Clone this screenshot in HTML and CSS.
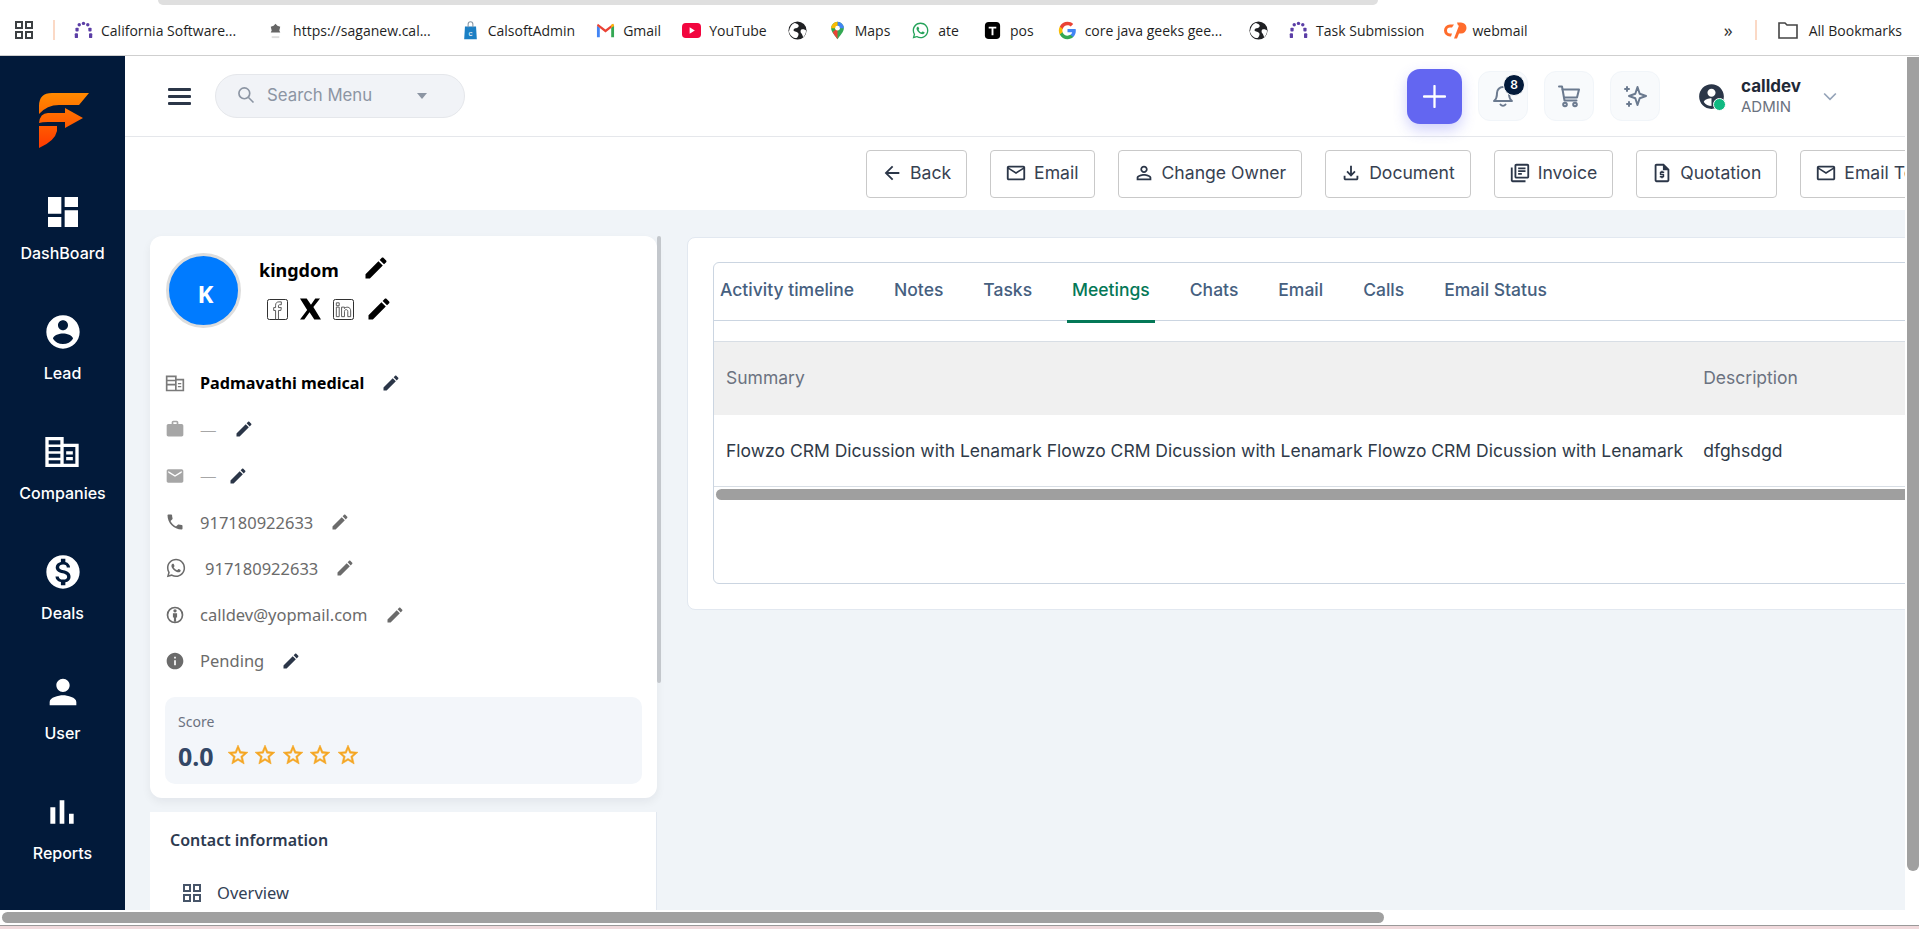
FILE: index.html
```html
<!DOCTYPE html>
<html lang="en">
<head>
    <meta charset="UTF-8">
    <title>Flowzo CRM - Lead</title>
    <link rel="stylesheet" href="styles.css">
</head>
<body>
    <svg class="sprite" xmlns="http://www.w3.org/2000/svg">
        <symbol id="i-edit" viewBox="0 0 24 24"><path d="M3 17.25V21h3.75L17.81 9.94l-3.75-3.75L3 17.25zM20.71 7.04c.39-.39.39-1.02 0-1.41l-2.34-2.34c-.39-.39-1.02-.39-1.41 0l-1.83 1.83 3.75 3.75 1.83-1.83z"/></symbol>
        <symbol id="i-star" viewBox="0 0 24 24"><path d="M22 9.24l-7.19-.62L12 2 9.19 8.63 2 9.24l5.46 4.73L5.82 21 12 17.27 18.18 21l-1.63-7.03L22 9.24zM12 15.4l-3.76 2.27 1-4.28-3.32-2.88 4.38-.38L12 6.1l1.71 4.04 4.38.38-3.32 2.88 1 4.28L12 15.4z"/></symbol>
        <symbol id="i-mail" viewBox="0 0 24 24"><path d="M20 4H4c-1.1 0-1.99.9-1.99 2L2 18c0 1.1.9 2 2 2h16c1.1 0 2-.9 2-2V6c0-1.1-.9-2-2-2zm0 14H4V8l8 5 8-5v10zm-8-7L4 6h16l-8 5z"/></symbol>
        <symbol id="i-arc" viewBox="0 0 20 20"><g fill="#5b3ea6"><circle cx="10" cy="2.5" r="1.8"/><circle cx="5.5" cy="4" r="1.8"/><circle cx="14.5" cy="4" r="1.8"/><rect x="1.5" y="7" width="3.4" height="4" rx="1"/><rect x="15.1" y="7" width="3.4" height="4" rx="1"/><rect x="0.8" y="13" width="3.4" height="5" rx="1"/><rect x="15.8" y="13" width="3.4" height="5" rx="1"/></g></symbol>
        <symbol id="i-globe" viewBox="0 0 20 20"><circle cx="10" cy="10" r="9.5" fill="#202124"/><path d="M7 2c3 1 5 2 4 4S7 7 6 9s2 2 4 3 1 4-1 6c-4 0-7-3-8-7 1-5 3-8 6-9zM14 9c2-1 4 0 5 1 0 3-1 5-3 7-1-2-1-3-2-4s-1-3 0-4z" fill="#fff"/></symbol>
    </svg>

    <div class="tabstrip-edge"></div>

    <!-- browser bookmarks bar -->
    <div class="bookmarks">
        <svg class="bm-apps" viewBox="0 0 18 18"><g fill="none" stroke="#3c4043" stroke-width="2"><rect x="1" y="1" width="6" height="6"/><rect x="11" y="1" width="6" height="6"/><rect x="1" y="11" width="6" height="6"/><rect x="11" y="11" width="6" height="6"/></g></svg>
        <span class="bm-sep"></span>
        <a class="bm bm-wide"><svg class="bm-ico"><use href="#i-arc"/></svg>California Software...</a>
        <a class="bm bm-wide"><svg class="bm-ico" viewBox="0 0 20 20"><path d="M10 3l2 2 3 1-1 4 1 2H5l1-2-1-4 3-1z" fill="#666"/><path d="M6 17h8" stroke="#ddd" stroke-width="2"/></svg>https://saganew.cal...</a>
        <a class="bm"><svg class="bm-ico" viewBox="0 0 20 24"><path d="M3 7h14l1 16H2z" fill="#1b7fc4"/><path d="M7 8V4a3 3 0 0 1 6 0v4" fill="none" stroke="#8a9aa8" stroke-width="1.4"/><text x="10" y="19" font-size="10" font-family="Liberation Sans" fill="#fff" text-anchor="middle">c</text></svg>CalsoftAdmin</a>
        <a class="bm"><svg class="bm-ico" viewBox="0 0 20 16"><path d="M1 15V3l3 2v10z" fill="#4285f4"/><path d="M19 15V3l-3 2v10z" fill="#34a853"/><path d="M1 3l9 7 9-7-1-2-8 6-8-6z" fill="#ea4335"/><path d="M16 5l3-2-1-2-2 1z" fill="#fbbc04"/></svg>Gmail</a>
        <a class="bm"><svg class="bm-ico" viewBox="0 0 20 20"><rect y="2" width="20" height="16" rx="4" fill="#f2063f"/><path d="M8 6.5l5.5 3.5L8 13.5z" fill="#fff"/></svg>YouTube</a>
        <a class="bm"><svg class="bm-ico"><use href="#i-globe"/></svg></a>
        <a class="bm"><svg class="bm-ico" viewBox="0 0 20 24"><path d="M10 1a8 8 0 0 1 8 8c0 5-5 9-8 14-3-5-8-9-8-14a8 8 0 0 1 8-8z" fill="#34a853"/><path d="M10 1a8 8 0 0 1 8 8l-8 0z" fill="#4285f4"/><path d="M2 9a8 8 0 0 1 8-8v8z" fill="#fbbc04"/><path d="M4 14l6-5v14c-2-3-5-6-6-9z" fill="#ea4335"/><circle cx="10" cy="9" r="3" fill="#fff"/></svg>Maps</a>
        <a class="bm bm-mid"><svg class="bm-ico" viewBox="0 0 24 24"><path fill="#25a35a" d="M12.04 2C6.58 2 2.13 6.45 2.13 11.91c0 1.75.46 3.45 1.32 4.95L2.05 22l5.25-1.38c1.45.79 3.08 1.21 4.74 1.21 5.46 0 9.91-4.45 9.91-9.91C21.95 6.45 17.5 2 12.04 2zm.01 1.67c2.2 0 4.26.86 5.82 2.42a8.2 8.2 0 0 1 2.41 5.83c0 4.54-3.7 8.23-8.24 8.23-1.48 0-2.93-.39-4.19-1.15l-.3-.17-3.12.82.83-3.04-.2-.32a8.2 8.2 0 0 1-1.26-4.38c0-4.54 3.7-8.24 8.25-8.24zM8.53 7.33c-.16 0-.43.06-.66.31-.22.25-.87.86-.87 2.07 0 1.22.89 2.39 1 2.56.14.17 1.76 2.67 4.25 3.73.59.27 1.05.42 1.41.53.59.19 1.13.16 1.56.1.48-.07 1.46-.6 1.67-1.18.21-.58.21-1.07.15-1.18-.07-.1-.23-.16-.48-.27-.25-.14-1.47-.74-1.69-.82-.23-.08-.37-.12-.56.12-.16.25-.64.81-.78.97-.15.17-.29.19-.53.07-.26-.13-1.06-.39-2-1.23-.74-.66-1.23-1.47-1.38-1.72-.12-.24-.01-.39.11-.5.11-.11.27-.29.37-.44.13-.14.17-.25.25-.41.08-.17.04-.31-.02-.43-.06-.11-.56-1.35-.77-1.84-.2-.48-.4-.42-.56-.43-.14 0-.3-.01-.47-.01z"/></svg>ate</a>
        <a class="bm bm-mid"><svg class="bm-ico" viewBox="0 0 20 20"><rect x="2" y="1" width="16" height="18" rx="4" fill="#000"/><path d="M6 6h8v2h-3v7H9V8H6z" fill="#fff"/></svg>pos</a>
        <a class="bm bm-google"><svg class="bm-ico" viewBox="0 0 24 24"><path fill="#4285f4" d="M22.5 12.2c0-.8-.1-1.5-.2-2.2H12v4.2h5.9c-.3 1.4-1 2.5-2.2 3.3v2.7h3.6c2-1.9 3.2-4.7 3.2-8z"/><path fill="#34a853" d="M12 23c2.9 0 5.4-1 7.2-2.7l-3.6-2.8c-1 .7-2.2 1-3.7 1-2.8 0-5.2-1.9-6-4.4H2.3v2.8C4.1 20.5 7.8 23 12 23z"/><path fill="#fbbc04" d="M5.900 14c-.2-.7-.4-1.400-.4-2s.1-1.400.4-2V7.100H2.300C1.500 8.600 1 10.300 1 12s.5 3.400 1.300 4.900z"/><path fill="#ea4335" d="M12 5.400c1.600 0 3 .5 4.100 1.600l3.100-3.100C17.400 2.100 14.900 1 12 1 7.800 1 4.100 3.500 2.300 7.100L5.900 10c.8-2.700 3.200-4.600 6.100-4.600z"/></svg>core java geeks gee...</a>
        <a class="bm"><svg class="bm-ico"><use href="#i-globe"/></svg></a>
        <a class="bm bm-tight"><svg class="bm-ico"><use href="#i-arc"/></svg>Task Submission</a>
        <a class="bm bm-tight"><svg class="bm-ico bm-cp" viewBox="0 0 24 18"><path d="M1 9a6 6 0 0 1 6-6h4l-2 3H7a3 3 0 0 0 0 6h2l-1 3H7a6 6 0 0 1-6-6z" fill="#ff6c2c"/><path d="M14 1h4a5.500 5.500 0 0 1 0 11h-2l-2 5h-3l5-13h-1z" fill="#ff6c2c"/></svg>webmail</a>
        <span class="bm-more">»</span>
        <span class="bm-sep bm-sep-end"></span>
        <a class="bm bm-all"><svg class="bm-ico bm-folder" viewBox="0 0 22 20"><path d="M2 3h6l2 2h10v13H2z" fill="none" stroke="#444" stroke-width="1.600"/></svg>All Bookmarks</a>
    </div>

    <div class="stage">
        <!-- sidebar -->
        <nav class="sidebar">
            <svg class="logo" viewBox="0 0 50 55">
                <defs><linearGradient id="logo-grad" x1="0" y1="0" x2="0" y2="1"><stop offset="0" stop-color="#ff8a00"/><stop offset="1" stop-color="#ff3a00"/></linearGradient></defs>
                <path fill="url(#logo-grad)" d="M13 0H50L40 12H20Q8 12 0 21V13Q0 0 13 0zM0 30Q1 20 9 20H26V15L44 25L26 35V29H9Q3 29 0 30zM0 33H18V38Q16 48 0 55z"/>
            </svg>
            <a class="nav-item"><svg viewBox="0 0 24 24"><path d="M3 13h8V3H3v10zm0 8h8v-6H3v6zm10 0h8V11h-8v10zm0-18v6h8V3h-8z"/></svg><span>DashBoard</span></a>
            <a class="nav-item"><svg viewBox="0 0 24 24"><path d="M12 2C6.480 2 2 6.480 2 12s4.480 10 10 10 10-4.480 10-10S17.520 2 12 2zm0 3c1.660 0 3 1.340 3 3s-1.340 3-3 3-3-1.340-3-3 1.340-3 3-3zm0 14.200c-2.500 0-4.710-1.280-6-3.220.03-1.990 4-3.080 6-3.080 1.990 0 5.970 1.090 6 3.080-1.290 1.940-3.500 3.220-6 3.220z"/></svg><span>Lead</span></a>
            <a class="nav-item"><svg viewBox="0 0 24 24"><path fill-rule="evenodd" d="M2 3h11v4h9v14H2zM4 5v2.500h7V5zM4 9v2.500h7V9zM4 13v2.500h7V13zM4 17v2h7v-2zM13 9v10h7V9zM14.500 11.500h4v2h-4zM14.500 15h4v2h-4z"/></svg><span>Companies</span></a>
            <a class="nav-item"><svg viewBox="0 0 24 24"><path d="M12 2C6.480 2 2 6.480 2 12s4.480 10 10 10 10-4.480 10-10S17.520 2 12 2zm1.410 16.090V20h-2.670v-1.930c-1.710-.36-3.160-1.460-3.270-3.400h1.960c.1 1.050.82 1.870 2.650 1.870 1.960 0 2.400-.98 2.400-1.590 0-.83-.44-1.610-2.670-2.140-2.480-.6-4.180-1.620-4.180-3.670 0-1.720 1.390-2.840 3.110-3.210V4h2.670v1.950c1.860.45 2.790 1.860 2.850 3.390H14.300c-.05-1.110-.64-1.870-2.220-1.870-1.500 0-2.400.68-2.400 1.640 0 .84.65 1.390 2.670 1.910s4.180 1.390 4.180 3.910c-.01 1.830-1.380 2.830-3.120 3.160z"/></svg><span>Deals</span></a>
            <a class="nav-item"><svg viewBox="0 0 24 24"><path d="M12 12c2.210 0 4-1.790 4-4s-1.790-4-4-4-4 1.790-4 4 1.790 4 4 4zm0 2c-2.670 0-8 1.340-8 4v2h16v-2c0-2.660-5.330-4-8-4z"/></svg><span>User</span></a>
            <a class="nav-item"><svg viewBox="0 0 24 24"><path d="M5 9.200h3V19H5zM10.600 5h2.800v14h-2.800zm5.600 8H19v6h-2.800z"/></svg><span>Reports</span></a>
        </nav>

        <div class="page">
            <!-- top header -->
            <header class="topbar">
                <div class="topbar-left">
                    <div class="hamburger"><span></span><span></span><span></span></div>
                    <div class="search">
                        <svg class="search-ico" viewBox="0 0 24 24"><circle cx="10" cy="10" r="6.500"/><path d="M15 15l6 6"/></svg>
                        <span class="search-text">Search Menu</span>
                        <span class="search-caret"></span>
                    </div>
                </div>
                <div class="topbar-right">
                    <button class="add-btn"><svg viewBox="0 0 24 24"><path d="M12 1v22M1 12h22"/></svg></button>
                    <div class="tool-btn">
                        <svg viewBox="0 0 24 24"><path d="M6 9a6 6 0 0 1 12 0c0 6 3 8 3 8H3s3-2 3-8"/><path d="M9.500 20.500a3 3 0 0 0 5 0"/></svg>
                        <span class="badge">8</span>
                    </div>
                    <div class="tool-btn">
                        <svg viewBox="0 0 24 24"><circle cx="8" cy="20.500" r="1.800"/><circle cx="18" cy="20.500" r="1.800"/><path d="M2 2.500h3l2.500 14h12"/><path d="M5.600 5.500H22l-2 8H7"/></svg>
                    </div>
                    <div class="tool-btn">
                        <svg viewBox="0 0 24 24"><path d="M14.500 3l2.200 6.800 6.300 2.200-6.300 2.200-2.200 6.800-2.200-6.800L6 12l6.300-2.200z"/><path d="M4 3v4M2 5h4M6 18v4M4 20h4"/></svg>
                    </div>
                    <div class="user">
                        <div class="user-avatar">
                            <svg viewBox="0 0 24 24"><path d="M12 1C5.900 1 1 5.900 1 12s4.900 11 11 11 11-4.900 11-11S18.100 1 12 1zm0 4c2 0 3.600 1.600 3.600 3.600S14 12.200 12 12.200 8.400 10.600 8.400 8.600 10 5 12 5zm0 15.500c-2.800 0-5.300-1.400-6.800-3.600 0-2.200 4.500-3.400 6.800-3.400z"/></svg>
                            <span class="user-dot"></span>
                        </div>
                        <div class="user-name">
                            <strong>calldev</strong>
                            <small>ADMIN</small>
                        </div>
                        <svg class="user-chevron" viewBox="0 0 24 24"><path d="M5 9l7 7 7-7"/></svg>
                    </div>
                </div>
            </header>

            <!-- action buttons -->
            <div class="actions">
                <a class="action"><svg viewBox="0 0 24 24"><path d="M20 11H7.830l5.590-5.590L12 4l-8 8 8 8 1.410-1.410L7.830 13H20v-2z"/></svg>Back</a>
                <a class="action"><svg><use href="#i-mail"/></svg>Email</a>
                <a class="action"><svg viewBox="0 0 24 24"><path d="M12 5.900c1.160 0 2.100.94 2.100 2.100s-.94 2.100-2.100 2.100S9.900 9.160 9.900 8s.94-2.100 2.100-2.100m0 9c2.970 0 6.100 1.460 6.100 2.100v1.100H5.900V17c0-.64 3.130-2.100 6.100-2.100M12 4C9.790 4 8 5.790 8 8s1.790 4 4 4 4-1.790 4-4-1.790-4-4-4zm0 9c-2.670 0-8 1.340-8 4v3h16v-3c0-2.660-5.330-4-8-4z"/></svg>Change Owner</a>
                <a class="action"><svg viewBox="0 0 24 24"><path d="M18 15v3H6v-3H4v3c0 1.100.9 2 2 2h12c1.100 0 2-.9 2-2v-3h-2zm-1-4l-1.410-1.410L13 12.170V4h-2v8.170L8.410 9.590 7 11l5 5 5-5z"/></svg>Document</a>
                <a class="action"><svg viewBox="0 0 24 24"><path d="M4 6H2v14c0 1.100.9 2 2 2h14v-2H4V6zm16-4H8c-1.100 0-2 .9-2 2v12c0 1.100.9 2 2 2h12c1.100 0 2-.9 2-2V4c0-1.100-.9-2-2-2zm0 14H8V4h12v12zM10 9h8v2h-8zm0 3h4v2h-4zm0-6h8v2h-8z"/></svg>Invoice</a>
                <a class="action"><svg viewBox="0 0 24 24"><path d="M14 2H6c-1.100 0-2 .9-2 2v16c0 1.100.9 2 2 2h12c1.100 0 2-.9 2-2V8l-6-6zM6 20V4h7v5h5v11H6z"/><path d="M11 19h2v-1h1c.55 0 1-.45 1-1v-3c0-.55-.45-1-1-1h-3v-1h4v-2h-2V9h-2v1h-1c-.55 0-1 .45-1 1v3c0 .55.45 1 1 1h3v1H9v2h2v1z" transform="translate(2.400 2.400) scale(.8)"/></svg>Quotation</a>
                <a class="action"><svg><use href="#i-mail"/></svg>Email Template</a>
            </div>

            <div class="content">
                <!-- left column -->
                <div class="left-col">
                    <div class="profile-card">
                        <div class="profile-head">
                            <div class="avatar">K</div>
                            <div class="profile-meta">
                                <div class="profile-name">
                                    <span>kingdom</span>
                                    <svg class="edit edit-lg"><use href="#i-edit"/></svg>
                                </div>
                                <div class="profile-social">
                                    <svg class="social" viewBox="0 0 22 22"><rect x=".5" y=".5" width="21" height="21" rx="2" fill="none" stroke="#222"/><path d="M9 21.500V12H7V9h2V6.500C9 4 10.500 3 12.500 3H15v3h-1.800c-1 0-1.200.5-1.200 1.200V9h3l-.5 3H12v9.500" fill="none" stroke="#555"/></svg>
                                    <svg class="social social-x" viewBox="0 0 22 22"><path d="M0 0h7l4.500 6.500L16 0h5l-7 9 8 13h-7l-5-7.500L4.500 22H0l7.500-10z" fill="#000"/></svg>
                                    <svg class="social" viewBox="0 0 22 22"><rect x=".5" y=".5" width="21" height="21" rx="2" fill="none" stroke="#222"/><path d="M3.500 8.500h3v10h-3zM3.500 4h3v3h-3zM9 8.500h3v1.500c1-2 6.500-2.500 6.500 2.500v6h-3v-5.500c0-2.500-3.500-2.500-3.500 0v5.500H9z" fill="none" stroke="#555"/></svg>
                                    <svg class="edit edit-lg"><use href="#i-edit"/></svg>
                                </div>
                            </div>
                        </div>

                        <div class="info-row info-strong">
                            <svg class="info-ico info-outline" viewBox="0 0 24 24"><path fill-rule="evenodd" d="M1 3h13v4h9v15H1zM3 5v3h9V5zM3 10v3h9v-3zM3 15v5h9v-5zM14 9v11h7V9zM15.500 12h4v1.500h-4zM15.500 15.500h4V17h-4z"/></svg>
                            <span>Padmavathi medical</span>
                            <svg class="edit edit-dark"><use href="#i-edit"/></svg>
                        </div>
                        <div class="info-row">
                            <svg class="info-ico info-light" viewBox="0 0 24 24"><path d="M20 6h-4V4c0-1.110-.89-2-2-2h-4c-1.110 0-2 .89-2 2v2H4c-1.110 0-1.990.89-1.990 2L2 19c0 1.110.89 2 2 2h16c1.110 0 2-.89 2-2V8c0-1.110-.89-2-2-2zm-6 0h-4V4h4v2z"/></svg>
                            <span class="dash">—</span>
                            <svg class="edit edit-dark"><use href="#i-edit"/></svg>
                        </div>
                        <div class="info-row">
                            <svg class="info-ico info-light" viewBox="0 0 24 24"><path d="M20 4H4c-1.100 0-1.990.9-1.990 2L2 18c0 1.100.9 2 2 2h16c1.100 0 2-.9 2-2V6c0-1.100-.9-2-2-2zm0 4l-8 5-8-5V6l8 5 8-5v2z"/></svg>
                            <span class="dash">—</span>
                            <svg class="edit edit-dark edit-near"><use href="#i-edit"/></svg>
                        </div>
                        <div class="info-row">
                            <svg class="info-ico" viewBox="0 0 24 24"><path d="M6.620 10.790c1.440 2.830 3.760 5.140 6.590 6.590l2.200-2.200c.27-.27.67-.36 1.020-.24 1.120.37 2.330.57 3.570.57.55 0 1 .45 1 1V20c0 .55-.45 1-1 1-9.390 0-17-7.610-17-17 0-.55.45-1 1-1h3.500c.55 0 1 .45 1 1 0 1.250.2 2.450.57 3.570.11.35.03.74-.25 1.020l-2.200 2.200z"/></svg>
                            <span>917180922633</span>
                            <svg class="edit"><use href="#i-edit"/></svg>
                        </div>
                        <div class="info-row info-whatsapp">
                            <svg class="info-ico" viewBox="0 0 24 24"><path d="M12.040 2C6.580 2 2.130 6.450 2.130 11.910c0 1.750.46 3.450 1.320 4.950L2.050 22l5.250-1.380c1.450.79 3.080 1.210 4.740 1.210 5.460 0 9.910-4.450 9.910-9.910C21.950 6.450 17.500 2 12.040 2zm.01 1.670c2.200 0 4.260.86 5.820 2.420a8.200 8.200 0 0 1 2.410 5.830c0 4.540-3.700 8.230-8.240 8.230-1.480 0-2.930-.39-4.190-1.150l-.3-.17-3.120.82.83-3.040-.2-.32a8.200 8.200 0 0 1-1.260-4.380c0-4.540 3.700-8.240 8.250-8.240zM8.530 7.330c-.16 0-.43.06-.66.31-.22.25-.87.86-.87 2.070 0 1.220.89 2.390 1 2.560.14.17 1.760 2.670 4.250 3.730.59.27 1.050.42 1.410.53.59.19 1.130.16 1.560.1.480-.07 1.460-.6 1.670-1.180.21-.58.21-1.070.15-1.180-.07-.1-.23-.16-.48-.27-.25-.14-1.470-.74-1.690-.82-.23-.08-.37-.12-.56.12-.16.25-.64.81-.78.97-.15.17-.29.19-.53.07-.26-.13-1.060-.39-2-1.230-.74-.66-1.230-1.470-1.380-1.720-.12-.24-.01-.39.11-.5.11-.11.27-.29.37-.44.13-.14.17-.25.25-.41.08-.17.04-.31-.02-.43-.06-.11-.56-1.350-.77-1.840-.2-.48-.4-.42-.56-.43-.14 0-.3-.01-.47-.01z"/></svg>
                            <span>917180922633</span>
                            <svg class="edit"><use href="#i-edit"/></svg>
                        </div>
                        <div class="info-row">
                            <svg class="info-ico" viewBox="0 0 24 24"><path fill-rule="evenodd" d="M12 2a10 10 0 1 0 0 20 10 10 0 0 0 0-20zm0 2a8 8 0 1 1 0 16 8 8 0 0 1 0-16z"/><circle cx="12" cy="7" r="2"/><path d="M9.500 10h5v5h-1.200v5h-2.600v-5H9.500z"/></svg>
                            <span>calldev@yopmail.com</span>
                            <svg class="edit"><use href="#i-edit"/></svg>
                        </div>
                        <div class="info-row">
                            <svg class="info-ico" viewBox="0 0 24 24"><path d="M12 2C6.480 2 2 6.480 2 12s4.480 10 10 10 10-4.480 10-10S17.520 2 12 2zm1 15h-2v-6h2v6zm0-8h-2V7h2v2z"/></svg>
                            <span>Pending</span>
                            <svg class="edit edit-dark"><use href="#i-edit"/></svg>
                        </div>

                        <div class="score-box">
                            <div class="score-label">Score</div>
                            <div class="score-line">
                                <span class="score-value">0.0</span>
                                <svg class="star"><use href="#i-star"/></svg>
                                <svg class="star"><use href="#i-star"/></svg>
                                <svg class="star"><use href="#i-star"/></svg>
                                <svg class="star"><use href="#i-star"/></svg>
                                <svg class="star"><use href="#i-star"/></svg>
                            </div>
                        </div>
                    </div>
                    <div class="card-scroll"></div>

                    <div class="contact-card">
                        <h3>Contact information</h3>
                        <a class="contact-link">
                            <svg viewBox="0 0 18 18"><g fill="none" stroke="#475569" stroke-width="2"><rect x="1" y="1" width="6" height="6"/><rect x="11" y="1" width="6" height="6"/><rect x="1" y="11" width="6" height="6"/><rect x="11" y="11" width="6" height="6"/></g></svg>
                            Overview
                        </a>
                    </div>
                </div>

                <!-- right column -->
                <div class="main-card">
                    <div class="tabs-box">
                        <div class="tabs">
                            <a class="tab">Activity timeline</a>
                            <a class="tab">Notes</a>
                            <a class="tab">Tasks</a>
                            <a class="tab active">Meetings</a>
                            <a class="tab">Chats</a>
                            <a class="tab">Email</a>
                            <a class="tab">Calls</a>
                            <a class="tab">Email Status</a>
                        </div>
                        <table class="meetings">
                            <thead>
                                <tr><th>Summary</th><th>Description</th></tr>
                            </thead>
                            <tbody>
                                <tr>
                                    <td>Flowzo CRM Dicussion with Lenamark Flowzo CRM Dicussion with Lenamark Flowzo CRM Dicussion with Lenamark</td>
                                    <td>dfghsdgd</td>
                                </tr>
                            </tbody>
                        </table>
                        <div class="table-scroll"></div>
                    </div>
                </div>
            </div>
        </div>

        <div class="v-gutter"><div class="v-thumb"></div></div>
    </div>

    <div class="h-gutter"><div class="h-thumb"></div></div>
    <div class="taskbar-edge"></div>
</body>
</html>
```

FILE: styles.css
```css
html, body {
    margin: 0;
    padding: 0;
    height: 929px;
    overflow: hidden;
    background: #fff;
    font-family: "Noto Sans", sans-serif;
}
a { color: inherit; text-decoration: none; }
.sprite { display: none; }

/* browser chrome */
.tabstrip-edge {
    position: absolute;
    top: 0;
    left: 158px;
    width: 1220px;
    height: 5px;
    background: #dfdfdf;
    border-radius: 0 0 12px 12px;
}
.bookmarks {
    border-bottom: 1px solid #cfcfcf;
    display: flex;
    align-items: center;
    padding: 5px 0 0 15px;
    box-sizing: border-box;
    height: 56px;
    font-family: "Open Sans", sans-serif;
    font-size: 14px;
    color: #1f1f1f;
    white-space: nowrap;
}
.bm-apps { width: 18px; height: 18px; }
.bm-sep {
    width: 2px;
    height: 20px;
    background: #fbd9c6;
    margin: 0 19px 0 20px;
}
.bm {
    display: flex;
    align-items: center;
    gap: 8px;
    margin-right: 21px;
}
.bm-wide { margin-right: 30px; }
.bm-mid { margin-right: 24px; }
.bm-google { margin-right: 27px; }
.bm-tight { margin-right: 19px; }
.bm-ico { width: 19px; height: 19px; flex: none; }
.bm-cp { width: 24px; margin-right: -3px; }
.bm-more { margin-left: auto; font-size: 18px; color: #333; margin-right: 22px; }
.bm-sep-end { margin: 0 20px 0 0; }
.bm-all { margin-right: 17px; gap: 10px; }
.bm-folder { width: 22px; height: 20px; }

/* layout */
.stage {
    display: flex;
    height: 854px;
    background: #fff;
}
.page {
    width: 1780px;
    flex: none;
    overflow: hidden;
    background: #f0f4f8;
    font-family: Inter, sans-serif;
}
.v-gutter { flex: 1; padding: 1px 0 0 2px; }
.v-thumb {
    width: 12px;
    height: 814px;
    background: #a0a0a0;
    border-radius: 0 0 6px 6px;
}
.h-gutter { height: 15px; box-sizing: border-box; padding-top: 2px; }
.h-thumb {
    width: 1382px;
    height: 11px;
    margin-left: 2px;
    background: #a0a0a0;
    border-radius: 6px;
}
.taskbar-edge {
    height: 4px;
    box-sizing: border-box;
    background: #f0d9dc;
    border-top: 1px solid #999;
}

/* sidebar */
.sidebar {
    width: 125px;
    flex: none;
    background: #021a3a;
    color: #fff;
    display: flex;
    flex-direction: column;
    align-items: center;
    font-family: Inter, sans-serif;
    box-sizing: border-box;
    padding-top: 37px;
}
.logo { width: 50px; height: 55px; margin-bottom: 44px; margin-left: 3px; flex: none; }
.nav-item {
    height: 120px;
    flex: none;
    display: flex;
    flex-direction: column;
    align-items: center;
    font-size: 16px;
    font-weight: 500;
}
.nav-item svg { width: 40px; height: 40px; fill: #fff; margin-bottom: 11px; }
.nav-item span { line-height: 20px; }

/* top header */
.topbar {
    height: 80px;
    background: #fff;
    border-bottom: 1px solid #e5e7eb;
    display: flex;
    justify-content: space-between;
    align-items: center;
    padding: 0 65px 0 43px;
}
.topbar-left { display: flex; align-items: center; gap: 24px; }
.hamburger { width: 23px; display: flex; flex-direction: column; gap: 4px; }
.hamburger span { height: 3px; background: #2b3648; border-radius: 1px; }
.search {
    width: 250px;
    height: 44px;
    box-sizing: border-box;
    background: #f1f3f7;
    border: 1px solid #e5e7eb;
    border-radius: 22px;
    display: flex;
    align-items: center;
    padding: 0 20px 2px;
    font-size: 16.8px;
    color: #8c95a3;
}
.search-ico { width: 20px; height: 20px; fill: none; stroke: #8c95a3; stroke-width: 2; margin-right: 11px; }
.search-text { flex: 1; }
.search-caret {
    width: 0;
    height: 0;
    border-left: 5px solid transparent;
    border-right: 5px solid transparent;
    border-top: 6px solid #8c95a3;
    margin: 2px 17px 0 0;
}
.topbar-right { display: flex; align-items: center; gap: 16px; }
.add-btn {
    width: 55px;
    height: 55px;
    border: none;
    border-radius: 13px;
    background: #6366f1;
    box-shadow: 0 6px 14px rgba(99, 102, 241, 0.3);
    display: flex;
    align-items: center;
    justify-content: center;
    padding: 0;
}
.add-btn svg { width: 23px; height: 23px; fill: none; stroke: #fff; stroke-width: 2.4; stroke-linecap: round; }
.tool-btn {
    position: relative;
    width: 50px;
    height: 50px;
    box-sizing: border-box;
    background: #f8fafc;
    border: 1px solid #f1f5f9;
    border-radius: 12px;
    display: flex;
    align-items: center;
    justify-content: center;
}
.tool-btn svg { width: 24px; height: 24px; fill: none; stroke: #6b7a8f; stroke-width: 2; stroke-linecap: round; stroke-linejoin: round; }
.badge {
    position: absolute;
    top: 2px;
    left: 24px;
    width: 20px;
    height: 20px;
    border-radius: 50%;
    background: #021a3a;
    border: 1px solid #fff;
    color: #fff;
    font-size: 12px;
    font-weight: 600;
    line-height: 20px;
    text-align: center;
}
.user { display: flex; align-items: center; margin-left: 22px; }
.user-avatar { position: relative; width: 27px; height: 27px; margin-right: 16px; }
.user-avatar svg { width: 27px; height: 27px; fill: #2b3648; display: block; }
.user-dot {
    position: absolute;
    right: -1px;
    bottom: -1px;
    width: 11px;
    height: 11px;
    border-radius: 50%;
    background: #10b981;
    border: 1px solid #fff;
}
.user-name { display: flex; flex-direction: column; margin-right: 19px; }
.user-name strong { font-size: 17px; line-height: 21px; color: #1f2937; font-weight: 700; }
.user-name small { font-size: 15px; line-height: 20px; color: #6b7280; }
.user-chevron { width: 20px; height: 20px; fill: none; stroke: #94a3b8; stroke-width: 2; }

/* action buttons */
.actions {
    height: 73px;
    background: #fff;
    display: flex;
    align-items: center;
    gap: 23px;
    padding-left: 741px;
    white-space: nowrap;
}
.action {
    flex: none;
    height: 48px;
    box-sizing: border-box;
    border: 1px solid #c9c9c9;
    border-radius: 4px;
    display: flex;
    align-items: center;
    gap: 7px;
    padding: 0 15px 2px 14px;
    font-size: 17.6px;
    color: #374151;
}
.action svg { width: 22px; height: 22px; fill: #2b3648; flex: none; }

/* two columns */
.content {
    display: flex;
    align-items: flex-start;
    padding: 26px 0 0 25px;
}
.left-col {
    position: relative;
    width: 507px;
    flex: none;
    margin-right: 30px;
    font-family: "Noto Sans", sans-serif;
}
.profile-card {
    height: 562px;
    box-sizing: border-box;
    background: #fff;
    border-radius: 12px;
    padding: 17px 15px 0;
    box-shadow: 0 4px 10px rgba(15, 23, 42, 0.06);
}
.card-scroll {
    position: absolute;
    top: 0;
    left: 507px;
    width: 4px;
    height: 447px;
    background: #c3c7cc;
    border-radius: 2px;
}
.profile-head { display: flex; gap: 18px; height: 107px; }
.avatar {
    width: 75px;
    height: 75px;
    box-sizing: border-box;
    margin-left: 1px;
    border: 3px solid #ddd;
    border-radius: 50%;
    background: #007bff;
    color: #fff;
    font-size: 24px;
    font-weight: 700;
    display: flex;
    align-items: center;
    justify-content: center;
    padding: 6px 0 0 4px;
}
.profile-name {
    display: flex;
    align-items: center;
    font-size: 18px;
    font-weight: 700;
    color: #000;
    height: 26px;
    margin-top: 2px;
}
.profile-name span { width: 103px; padding-top: 3px; }
.profile-social {
    display: flex;
    align-items: center;
    gap: 12px;
    margin: 14px 0 0 8px;
}
.profile-social .edit-lg { margin-left: -1px; }
.social { width: 21px; height: 21px; flex: none; }
.social-x { width: 21px; height: 22px; }
.edit { width: 20px; height: 20px; fill: #6b6b6b; margin-left: 17px; flex: none; }
.edit-dark { fill: #2b3648; }
.edit-near { margin-left: 11px; }
.edit-lg { width: 28px; height: 28px; fill: #000; margin-left: 0; }
.info-row {
    height: 46.3px;
    display: flex;
    align-items: center;
    font-size: 16.5px;
    color: #6b6b6b;
}
.info-ico { width: 20px; height: 20px; fill: #6b6b6b; margin-right: 15px; flex: none; }
.info-light { fill: #a6a6a6; }
.info-outline { fill: #7a7a7a; }
.info-strong { color: #000; font-weight: 700; font-size: 16.2px; }
.info-whatsapp .info-ico { width: 22px; height: 22px; margin-right: 18px; }
.dash { color: #a6a6a6; font-weight: 300; }
.score-box {
    margin-top: 13px;
    height: 87px;
    box-sizing: border-box;
    background: #f3f6fa;
    border-radius: 10px;
    padding: 15px 13px;
}
.score-label { font-size: 14px; line-height: 20px; color: #6b7280; }
.score-line { display: flex; align-items: center; margin-top: 9px; }
.score-value { font-size: 25px; line-height: 30px; font-weight: 700; color: #334766; margin-right: 12px; }
.star { width: 24px; height: 24px; fill: #f5a623; margin: -3px 3.5px 0 0; stroke: #f5a623; stroke-width: .5; }
.contact-card {
    margin-top: 14px;
    height: 98px;
    box-sizing: border-box;
    background: #fff;
    border-right: 1px solid #e2e8f0;
    padding: 15px 20px;
}
.contact-card h3 {
    margin: 0 0 28px;
    font-size: 16px;
    line-height: 26px;
    font-weight: 600;
    color: #2d3a50;
}
.contact-link {
    display: flex;
    align-items: center;
    gap: 16px;
    margin-left: 13px;
    font-size: 16.5px;
    color: #334155;
}
.contact-link svg { width: 18px; height: 18px; }

/* tabs and table */
.main-card {
    flex: none;
    width: 1500px;
    height: 373px;
    margin-top: 1px;
    box-sizing: border-box;
    background: #fff;
    border: 1px solid #e2e8f0;
    border-radius: 8px;
    padding: 24px 25px;
}
.tabs-box {
    height: 322px;
    box-sizing: border-box;
    border: 1px solid #cbd5e1;
    border-radius: 6px;
}
.tabs {
    height: 58px;
    box-sizing: border-box;
    border-bottom: 1px solid #cbd5e1;
    display: flex;
    gap: 30px;
    padding-left: 1px;
}
.tab {
    position: relative;
    padding: 0 5px;
    font-size: 17.5px;
    font-weight: 500;
    line-height: 54px;
    height: 57px;
    color: #46607f;
}
.tab.active { color: #047857; }
.tab.active::after {
    content: "";
    position: absolute;
    left: 0;
    right: 0;
    bottom: -3px;
    height: 3px;
    background: #047857;
}
.meetings {
    margin-top: 20px;
    width: 100%;
    border-collapse: collapse;
    border-top: 1px solid #d8dee5;
    border-bottom: 1px solid #d8dee5;
    font-size: 17.5px;
    white-space: nowrap;
}
.meetings th {
    height: 70px;
    padding: 0 8px 3px 12px;
    background: #f0f0f0;
    text-align: left;
    font-weight: 400;
    color: #6b7280;
}
.meetings td {
    height: 70px;
    padding: 0 8px 1px 12px;
    color: #2f3a48;
}
.meetings th:first-child, .meetings td:first-child { width: 957px; }
.table-scroll {
    height: 11px;
    margin: 2px 0 0 2px;
    background: #9f9f9f;
    border-radius: 6px;
}
```
